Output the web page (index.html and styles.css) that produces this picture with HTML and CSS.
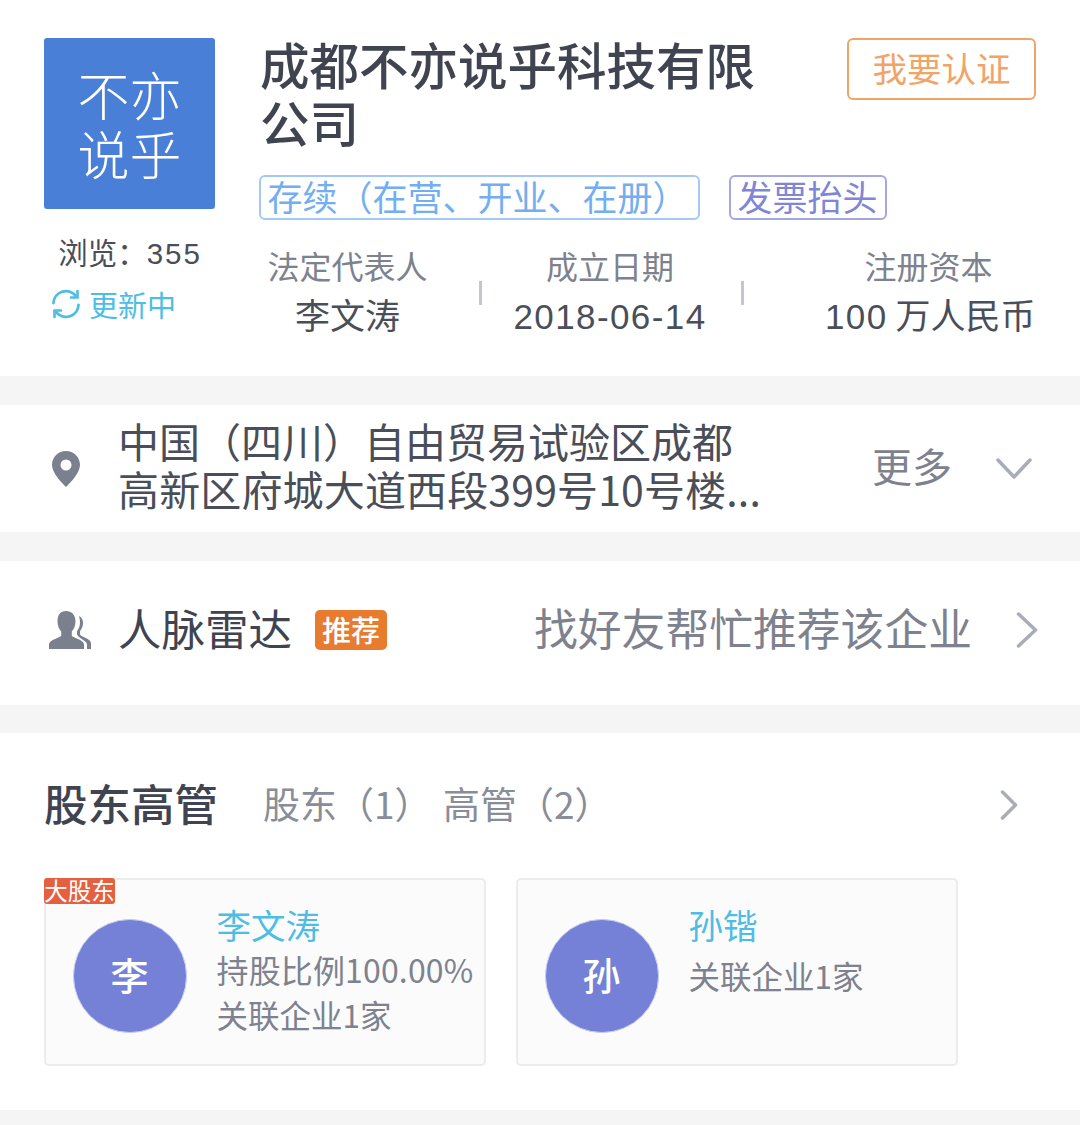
FILE: index.html
```html
<!DOCTYPE html>
<html lang="zh-CN">
<head>
    <meta charset="UTF-8">
    <meta name="viewport" content="width=device-width, initial-scale=1.0">
    <title>成都不亦说乎科技有限公司</title>
    <link rel="stylesheet" href="styles.css">
</head>
<body>
    <section class="company">
        <div class="company-side">
            <div class="logo">不亦<br>说乎</div>
            <div class="views">浏览：<span class="num">355</span></div>
            <div class="updating">
                <svg class="icon-refresh" viewBox="0 0 30 30" fill="none" stroke="#4dbde3" stroke-width="2.800" stroke-linecap="round">
                    <path d="M2.500 14A12.500 12.500 0 0 1 24.500 6.500"/>
                    <path d="M27.500 16A12.500 12.500 0 0 1 5.500 23.500"/>
                    <path d="M26.500 2v6.500H20" stroke-width="2.600"/>
                    <path d="M3.500 28v-6.500H10" stroke-width="2.600"/>
                </svg>
                <span>更新中</span>
            </div>
        </div>
        <div class="company-main">
            <div class="title-row">
                <h1>成都不亦说乎科技有限公司</h1>
                <button class="btn-verify">我要认证</button>
            </div>
            <div class="tags">
                <span class="tag tag-status">存续（在营、开业、在册）</span>
                <span class="tag tag-invoice">发票抬头</span>
            </div>
            <div class="stats">
                <div class="stat">
                    <div class="stat-label">法定代表人</div>
                    <div class="stat-value">李文涛</div>
                </div>
                <div class="stat stat-line">
                    <div class="stat-label">成立日期</div>
                    <div class="stat-value"><span class="digits">2018-06-14</span></div>
                </div>
                <div class="stat stat-line stat-money">
                    <div class="stat-label">注册资本</div>
                    <div class="stat-value"><span class="digits">100</span> 万人民币</div>
                </div>
            </div>
        </div>
    </section>

    <section class="address">
        <svg class="icon-pin" viewBox="0 0 28 36">
            <path fill="#7a808e" fill-rule="evenodd" d="M14 0C6.300 0 0 6.200 0 13.800 0 22 9 31 14 36c5-5 14-14 14-22.200C28 6.200 21.700 0 14 0zm0 8.500a5.500 5.500 0 1 1 0 11 5.500 5.500 0 0 1 0-11z"/>
        </svg>
        <div class="address-text">中国（四川）自由贸易试验区成都<br><span class="address-tail">高新区府城大道西段399号10号楼...</span></div>
        <span class="more">更多</span>
        <svg class="icon-down" viewBox="0 0 36 22" fill="none" stroke="#a9acb9" stroke-width="3.500" stroke-linecap="round" stroke-linejoin="round">
            <path d="M2 2l16 17L34 2"/>
        </svg>
    </section>

    <section class="radar">
        <svg class="icon-people" viewBox="0 0 42 38">
            <path fill="#7a808e" d="M17 0c5.500 0 9.500 4 9.500 10.500 0 4.300-1.600 7.800-3.700 10v4.200c1.300 2.400 10.700 3.300 12.200 8.300v5H0v-5c1.500-5 10.900-5.900 12.200-8.300v-4.200c-2.100-2.200-3.700-5.700-3.700-10C8.500 4 11.500 0 17 0z"/>
            <path fill="#7a808e" d="M30 5c3 1.500 4 4 4 7 0 3.500-1.400 6-2.900 8v3.700c1.200 2.300 9.900 3.300 10.900 8.300v6h-4v-5c-1-3.600-8.500-5.700-10-9.500v-3.500c1.800-2.300 3-5 3-8 0-2.500-.3-4.500-1-7z"/>
        </svg>
        <span class="radar-title">人脉雷达</span>
        <span class="badge-hot">推荐</span>
        <span class="radar-tip">找好友帮忙推荐该企业</span>
        <svg class="icon-right" viewBox="0 0 22 36" fill="none" stroke="#a9acb9" stroke-width="3.500" stroke-linecap="round" stroke-linejoin="round">
            <path d="M2.500 2L19.500 18 2.500 34"/>
        </svg>
    </section>

    <section class="holders">
        <div class="holders-head">
            <h2>股东高管</h2>
            <span class="holders-count">股东（1）</span>
            <span class="holders-count">高管（2）</span>
            <svg class="icon-right-small" viewBox="0 0 18 30" fill="none" stroke="#a9acb9" stroke-width="3.500" stroke-linecap="round" stroke-linejoin="round">
                <path d="M2.500 2L15.500 15 2.500 28"/>
            </svg>
        </div>
        <div class="cards">
            <div class="card">
                <span class="card-badge">大股东</span>
                <div class="avatar">李</div>
                <div class="card-info">
                    <div class="card-name">李文涛</div>
                    <div class="card-line card-line-share">持股比例100.00%</div>
                    <div class="card-line">关联企业1家</div>
                </div>
            </div>
            <div class="card">
                <div class="avatar">孙</div>
                <div class="card-info">
                    <div class="card-name">孙锴</div>
                    <div class="card-line card-line-single">关联企业1家</div>
                </div>
            </div>
        </div>
    </section>
</body>
</html>
```

FILE: styles.css
```css
* {
    margin: 0;
    padding: 0;
    box-sizing: border-box;
}

body {
    background-color: #f5f5f5;
    color: #3f4450;
    font-family: "Noto Sans CJK SC", "Noto Sans", sans-serif;
    width: 1080px;
    height: 1125px;
    overflow: hidden;
}

section {
    background-color: #ffffff;
}

/* company block */
.company {
    display: flex;
    height: 376px;
    margin-bottom: 29px;
}

.company-side {
    width: 216px;
    padding: 38px 0 0 44px;
}

.logo {
    width: 171px;
    height: 171px;
    background-color: #4a7fd8;
    border-radius: 3px;
    color: #ffffff;
    font-size: 52px;
    font-weight: 300;
    line-height: 59px;
    text-align: center;
    padding-top: 26px;
}

.views {
    margin-top: 21px;
    font-size: 29.500px;
    line-height: 42px;
    text-align: center;
    color: #4a4e59;
}

.views .num {
    font-family: "Liberation Sans", sans-serif;
    letter-spacing: 2px;
}

.updating {
    display: flex;
    align-items: center;
    gap: 8px;
    margin-top: 8px;
    padding-left: 7px;
    color: #4dbde3;
    font-size: 29px;
    line-height: 42px;
}

.icon-refresh {
    width: 30px;
    height: 30px;
}

.company-main {
    flex: 1;
}

.title-row {
    display: flex;
    justify-content: space-between;
    align-items: flex-start;
    padding: 35px 44px 0 44px;
}

h1 {
    width: 510px;
    font-size: 49.500px;
    font-weight: 500;
    line-height: 58px;
    color: #3f4450;
}

.btn-verify {
    width: 189px;
    height: 62px;
    margin-top: 3px;
    padding-bottom: 5px;
    background: #ffffff;
    border: 2px solid #f0a468;
    border-radius: 6px;
    color: #f0a468;
    font-family: inherit;
    font-size: 34.500px;
}

.tags {
    display: flex;
    gap: 29px;
    margin: 24px 0 0 43px;
}

.tag {
    height: 45px;
    padding: 0 6.500px;
    border: 2px solid;
    border-radius: 6px;
    font-size: 35px;
    line-height: 37px;
}

.tag-status {
    width: 441px;
    color: #73aef0;
    border-color: #a3caf6;
}

.tag-invoice {
    width: 158px;
    color: #7f86d6;
    border-color: #a3a8e2;
}

.stats {
    display: grid;
    grid-template-columns: 263px 262px 1fr;
    margin-top: 23px;
}

.stat {
    text-align: center;
}

.stat-line {
    background: linear-gradient(#c3c6ce, #c3c6ce) left 38px / 3px 24px no-repeat;
}

.stat-money {
    padding-left: 84px;
    width: 291px;
}

.stat-label {
    font-size: 32px;
    line-height: 44px;
    color: #7d828e;
}

.stat-value {
    margin-top: 2px;
    font-size: 35px;
    line-height: 50px;
    white-space: nowrap;
    color: #4a4e59;
}

.digits {
    font-family: "Liberation Sans", sans-serif;
    letter-spacing: 1.400px;
}

/* address row */
.address {
    display: flex;
    align-items: center;
    height: 127px;
    margin-bottom: 29px;
    padding: 0 48px 0 52px;
}

.icon-pin {
    width: 28px;
    height: 36px;
    margin-right: 40px;
}

.address-text {
    flex: 1;
    margin: 0 0 10px -2px;
    font-size: 41px;
    line-height: 48px;
    white-space: nowrap;
    color: #4a4e59;
}

.address-tail {
    letter-spacing: 0.150px;
}

.more {
    margin: 0 44px 8px 0;
    font-size: 40px;
    color: #7d828e;
}

.icon-down {
    width: 36px;
    height: 22px;
}

/* radar row */
.radar {
    display: flex;
    align-items: center;
    height: 144px;
    margin-bottom: 28px;
    padding: 0 42px 6px 49px;
}

.icon-people {
    width: 42px;
    height: 38px;
    margin-right: 27px;
}

.radar-title {
    margin-bottom: 6px;
    font-size: 43.500px;
    color: #3f4450;
}

.badge-hot {
    width: 72px;
    height: 40px;
    margin-left: 23px;
    background-color: #e87b2e;
    border-radius: 5px;
    color: #ffffff;
    font-size: 29px;
    font-weight: 500;
    line-height: 38px;
    text-align: center;
}

.radar-tip {
    margin: 0 44px 6px auto;
    font-size: 43.800px;
    color: #7d828e;
}

.icon-right {
    width: 22px;
    height: 36px;
}

/* shareholders */
.holders {
    height: 377px;
    padding: 0 44px;
}

.holders-head {
    display: flex;
    align-items: center;
    height: 145px;
}

h2 {
    margin: 0 45px 6px 0;
    font-size: 43.500px;
    font-weight: 500;
    color: #3f4450;
}

.holders-count {
    width: 180px;
    margin-bottom: 6px;
    font-size: 37px;
    color: #888d99;
}

.icon-right-small {
    width: 18px;
    height: 30px;
    margin: 0 18px 2px auto;
}

.cards {
    display: flex;
    gap: 30px;
}

.card {
    position: relative;
    display: flex;
    width: 442px;
    height: 188px;
    padding: 38.500px 0 0 26.500px;
    background-color: #fbfbfc;
    border: 2px solid #ececef;
    border-radius: 5px;
}

.card-badge {
    position: absolute;
    top: -2px;
    left: -2px;
    width: 71px;
    height: 26px;
    background-color: #e5603f;
    border-radius: 3px;
    color: #ffffff;
    font-size: 23.500px;
    line-height: 25px;
    text-align: center;
}

.avatar {
    width: 114px;
    height: 114px;
    border: 1px solid #c9cdee;
    border-radius: 50%;
    background-color: #7481d6;
    color: #ffffff;
    font-size: 38px;
    font-weight: 500;
    line-height: 108px;
    text-align: center;
}

.card-info {
    margin: -17.500px 0 0 30px;
}

.card-name {
    font-size: 34.500px;
    line-height: 46px;
    color: #4dbde3;
}

.card-line {
    font-size: 31.500px;
    line-height: 44.500px;
    white-space: nowrap;
    color: #7d828e;
}

.card-line-share {
    font-size: 32px;
    letter-spacing: 0.150px;
}

.card-line-single {
    margin-top: 6px;
}
```
